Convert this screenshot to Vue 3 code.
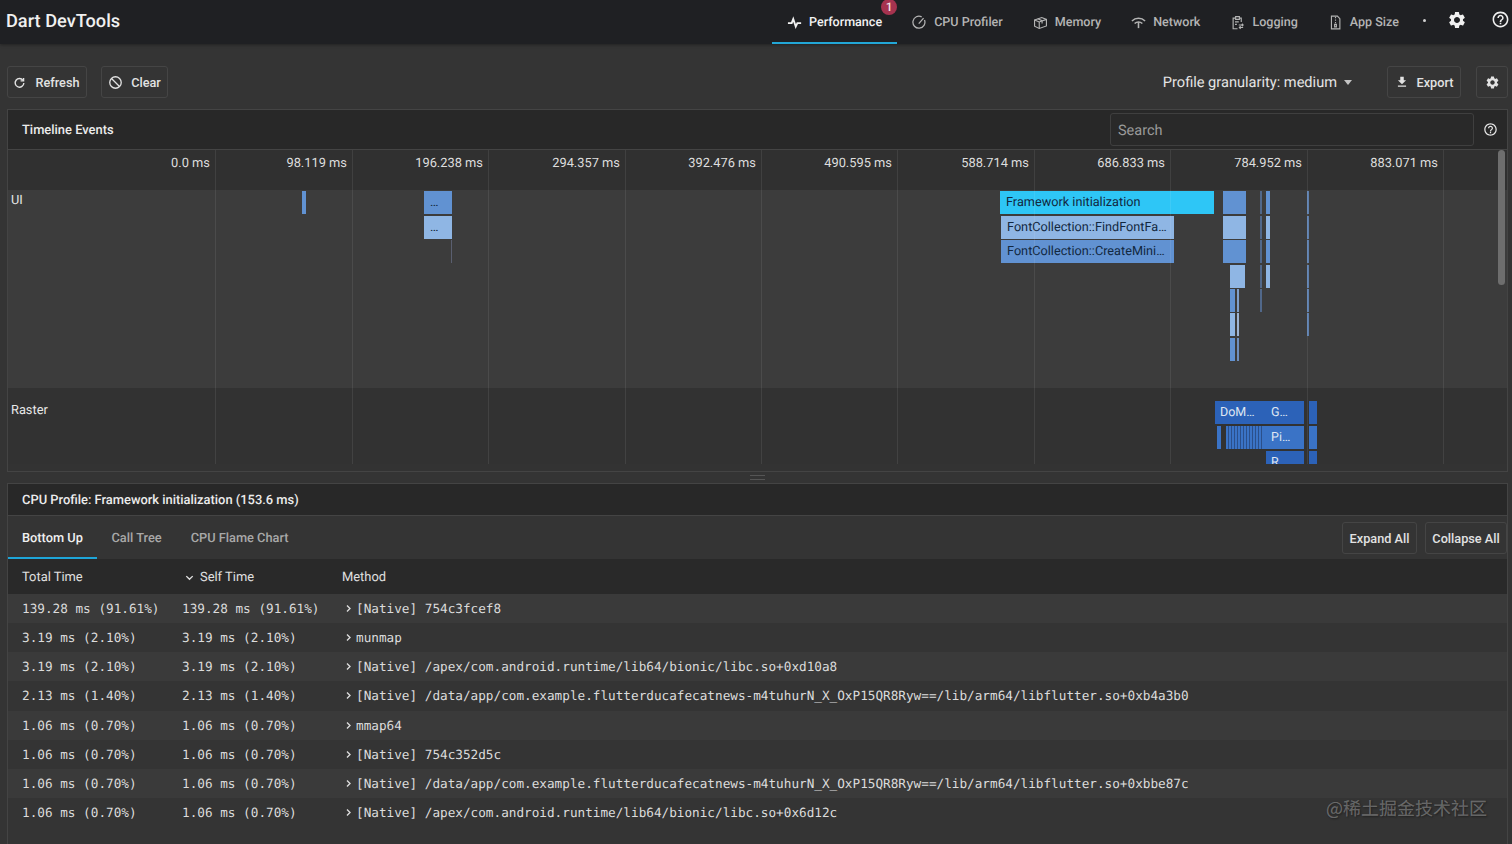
<script setup>
import { h } from 'vue'

const ICONS = {
  pulse: { stroke: ['M1.5 13h6L10 6.5l4 12 2.6-5.5h6'], w: 3 },
  gauge: { stroke: ['M20 8A9.6 9.6 0 1 1 15.5 3', 'M10.8 13.8 18.5 5'], w: 2 },
  box: { stroke: ['M2.5 8l11.5-4 7.5 3v10.5L10 21.5l-7.5-3.5z', 'M2.5 8l7.5 3.2L21.5 7', 'M10 11.2v10.3', 'M7.5 6l7 3v4.5'], w: 1.8 },
  wifi: { stroke: ['M1.5 9.5a15 15 0 0 1 21 0', 'M5.8 13.6a9 9 0 0 1 12.4 0', 'M12 11.5V21'], w: 2.5 },
  log: { stroke: ['M18 11V5h-3M9 5H5v17h7', 'M9 2.5h6V7H9z', 'M8 11h6M8 15h3', 'M14 16h7M19 14l2 2-2 2M21 20h-6M17 18l-2 2 2 2'], w: 1.8 },
  zip: { stroke: ['M5.5 1.8h9.5l4 4v16.4H5.5z', 'M12 3v2M12 7v2M12 11v2', 'M10.6 15h2.8v4h-2.8z'], w: 1.8 },
  refresh: { stroke: ['M18.5 8A8 8 0 1 0 20 13', 'M19.5 3.5V9h-5.5'], w: 2.6 },
  block: { stroke: ['M12 2.8a9.2 9.2 0 1 0 0 18.4 9.2 9.2 0 0 0 0-18.4z', 'M5.6 5.6l12.8 12.8'], w: 2.1 },
  download: { fill: ['M19 9h-4V3H9v6H5l7 7 7-7zM5 18v2h14v-2H5z'] },
  help: { fill: ['M11 18h2v-2h-2v2zm1-16C6.48 2 2 6.48 2 12s4.48 10 10 10 10-4.48 10-10S17.52 2 12 2zm0 18c-4.41 0-8-3.59-8-8s3.59-8 8-8 8 3.59 8 8-3.59 8-8 8zm0-14c-2.21 0-4 1.79-4 4h2c0-1.1.9-2 2-2s2 .9 2 2c0 2-3 1.75-3 5h2c0-2.25 3-2.5 3-5 0-2.21-1.79-4-4-4z'] },
  gear: { fill: ['M19.14 12.94c.04-.3.06-.61.06-.94 0-.32-.02-.64-.07-.94l2.03-1.58a.49.49 0 0 0 .12-.61l-1.92-3.32a.488.488 0 0 0-.59-.22l-2.39.96c-.5-.38-1.03-.7-1.62-.94l-.36-2.54a.484.484 0 0 0-.48-.41h-3.84c-.24 0-.43.17-.47.41l-.36 2.54c-.59.24-1.13.57-1.62.94l-2.39-.96c-.22-.08-.47 0-.59.22L2.74 8.87c-.12.21-.08.47.12.61l2.03 1.58c-.05.3-.09.63-.09.94s.02.64.07.94l-2.03 1.58a.49.49 0 0 0-.12.61l1.92 3.32c.12.22.37.29.59.22l2.39-.96c.5.38 1.03.7 1.62.94l.36 2.54c.05.24.24.41.48.41h3.84c.24 0 .44-.17.47-.41l.36-2.54c.59-.24 1.13-.56 1.62-.94l2.39.96c.22.08.47 0 .59-.22l1.92-3.32c.12-.22.07-.47-.12-.61l-2.01-1.58zM12 15.6c-1.98 0-3.6-1.62-3.6-3.6s1.62-3.6 3.6-3.6 3.6 1.62 3.6 3.6-1.62 3.6-3.6 3.6z'] },
  chevR: { stroke: ['M8 4l8 8-8 8'], w: 3.6 },
  chevD: { stroke: ['M5 9l7 7 7-7'], w: 3 },
}
const Icon = (props) => {
  const ic = ICONS[props.name]
  const kids = [
    ...(ic.fill || []).map((d) => h('path', { d, fill: 'currentColor' })),
    ...(ic.stroke || []).map((d) => h('path', { d, fill: 'none', stroke: 'currentColor', 'stroke-width': ic.w })),
  ]
  return h('svg', { viewBox: '0 0 24 24', width: props.size, height: props.size, style: 'flex:none;display:block' }, kids)
}
Icon.props = ['name', 'size']

const tabs = [
  { label: 'Performance', icon: 'pulse', active: true },
  { label: 'CPU Profiler', icon: 'gauge' },
  { label: 'Memory', icon: 'box' },
  { label: 'Network', icon: 'wifi' },
  { label: 'Logging', icon: 'log' },
  { label: 'App Size', icon: 'zip' },
]

const OX = 8
const OY = 150
const gridX = [215, 352, 488, 625, 761, 897, 1034, 1170, 1307, 1443]
const axis = ['0.0 ms', '98.119 ms', '196.238 ms', '294.357 ms', '392.476 ms', '490.595 ms', '588.714 ms', '686.833 ms', '784.952 ms', '883.071 ms']
const axisItems = axis.map((t, i) => ({ t, right: 1507 - gridX[i] + 5 }))

const MID = '#6192d2'
const LIGHT = '#8fb6e4'
const DIM = '#5d7fae'
const CY = '#2ec6f6'
const R1 = '#2c62b8'
const R2 = '#3a73c6'
const rows = [191, 216, 240, 265, 289, 313, 338]
function b(x1, x2, y, color, text = '', cls = '', hgt = 23) {
  return { x1, x2, y, color, text, cls, hgt }
}
const bars = [
  b(302, 306, 191, MID),
  b(424, 452, 191, MID, '…', 'dark'),
  b(424, 452, 216, LIGHT, '…', 'dark'),
  b(451, 452, 240, '#5a5f70'),
  b(1000, 1214, 191, CY, 'Framework initialization', 'dark'),
  b(1001, 1174, 216, LIGHT, 'FontCollection::FindFontFa…', 'dark'),
  b(1001, 1174, 240, MID, 'FontCollection::CreateMini…', 'dark'),
  b(1223, 1246, rows[0], MID),
  b(1223, 1246, rows[1], LIGHT),
  b(1223, 1246, rows[2], MID),
  b(1230, 1245, rows[3], LIGHT),
  b(1230, 1235, rows[4], MID),
  b(1237, 1239, rows[4], '#7f9fca'),
  b(1230, 1235, rows[5], LIGHT),
  b(1237, 1239, rows[5], '#9db4d4'),
  b(1230, 1235, rows[6], MID),
  b(1237, 1239, rows[6], '#6f8fbd'),
  ...rows.slice(0, 5).map((y) => b(1260, 1262, y, '#51688a')),
  b(1266, 1270, rows[0], MID),
  b(1266, 1270, rows[1], LIGHT),
  b(1266, 1270, rows[2], MID),
  b(1266, 1270, rows[3], LIGHT),
  ...rows.slice(0, 6).map((y) => b(1307, 1309, y, DIM)),
  b(1215, 1304, 401, R1),
  b(1309, 1317, 401, R1),
  b(1217, 1221, 426, R2),
  b(1226, 1262, 426, R2, '', 'stripes'),
  b(1262, 1304, 426, R2),
  b(1309, 1317, 426, R2),
  b(1266, 1304, 451, R1),
  b(1309, 1317, 451, R1),
]
const barStyle = (x) => ({
  left: x.x1 - OX + 'px',
  top: x.y - OY + 'px',
  width: x.x2 - x.x1 + 'px',
  height: x.hgt + 'px',
  backgroundColor: x.color,
})
const labels = [
  { t: 'DoM…', x: 1220, y: 401 },
  { t: 'G…', x: 1271, y: 401 },
  { t: 'Pi…', x: 1271, y: 426 },
  { t: 'R', x: 1271, y: 451 },
]

const data = [
  ['139.28 ms (91.61%)', '[Native] 754c3fcef8'],
  ['3.19 ms (2.10%)', 'munmap'],
  ['3.19 ms (2.10%)', '[Native] /apex/com.android.runtime/lib64/bionic/libc.so+0xd10a8'],
  ['2.13 ms (1.40%)', '[Native] /data/app/com.example.flutterducafecatnews-m4tuhurN_X_OxP15QR8Ryw==/lib/arm64/libflutter.so+0xb4a3b0'],
  ['1.06 ms (0.70%)', 'mmap64'],
  ['1.06 ms (0.70%)', '[Native] 754c352d5c'],
  ['1.06 ms (0.70%)', '[Native] /data/app/com.example.flutterducafecatnews-m4tuhurN_X_OxP15QR8Ryw==/lib/arm64/libflutter.so+0xbbe87c'],
  ['1.06 ms (0.70%)', '[Native] /apex/com.android.runtime/lib64/bionic/libc.so+0x6d12c'],
]
</script>

<template>
  <div class="page">
    <header class="top">
      <div class="brand">Dart DevTools</div>
      <nav class="nav">
        <div v-for="t in tabs" :key="t.label" class="nav-tab" :class="{ on: t.active }">
          <Icon :name="t.icon" :size="15" />
          <span>{{ t.label }}</span>
          <span v-if="t.active" class="badge">1</span>
        </div>
        <span class="nav-dot"></span>
        <Icon class="nav-gear" name="gear" :size="20" />
        <Icon class="nav-help" name="help" :size="19" />
      </nav>
    </header>

    <main class="main">
      <div class="toolbar">
        <button class="btn refresh"><Icon name="refresh" :size="13" />Refresh</button>
        <button class="btn clear"><Icon name="block" :size="15" />Clear</button>
        <div class="gran">Profile granularity: medium<span class="caret"></span></div>
        <button class="btn export"><Icon name="download" :size="14" />Export</button>
        <button class="btn cog"><Icon name="gear" :size="15" /></button>
      </div>

      <section class="panel timeline">
        <div class="panel-head">
          <span class="panel-title">Timeline Events</span>
          <div class="search">Search</div>
          <Icon class="q" name="help" :size="15" />
        </div>
        <div class="chart">
          <div class="band axis"></div>
          <div class="band ui"></div>
          <div class="band raster"></div>
          <div class="lane lane-ui">UI</div>
          <div class="lane lane-raster">Raster</div>
          <div v-for="x in bars" :key="x.x1 + '-' + x.y" class="bar" :class="x.cls" :style="barStyle(x)">{{ x.text }}</div>
          <div v-for="l in labels" :key="l.t" class="rlabel" :style="{ left: l.x - OX + 'px', top: l.y - OY + 'px' }">{{ l.t }}</div>
          <div v-for="x in gridX" :key="x" class="gline" :style="{ left: x - OX + 'px' }"></div>
          <div v-for="a in axisItems" :key="a.t" class="tick" :style="{ right: a.right + 'px' }">{{ a.t }}</div>
          <div class="thumb"></div>
        </div>
      </section>

      <div class="grip"><span></span></div>

      <section class="panel cpu">
        <div class="cpu-head"><span class="panel-title">CPU Profile: Framework initialization (153.6 ms)</span></div>
        <div class="cpu-tabs">
          <div class="ctab on">Bottom Up</div>
          <div class="ctab">Call Tree</div>
          <div class="ctab">CPU Flame Chart</div>
          <button class="btn expand">Expand All</button>
          <button class="btn collapse">Collapse All</button>
        </div>
        <div class="thead">
          <div>Total Time</div>
          <div class="self"><Icon name="chevD" :size="11" />Self Time</div>
          <div>Method</div>
        </div>
        <div v-for="(r, i) in data" :key="i" class="trow" :class="{ alt: i % 2 === 0 }">
          <div>{{ r[0] }}</div>
          <div>{{ r[0] }}</div>
          <div class="method"><Icon name="chevR" :size="9" /><span>{{ r[1] }}</span></div>
        </div>
      </section>
    </main>
    <div class="mark">@稀土掘金技术社区</div>
  </div>
</template>

<style>
html, body { margin: 0; background: #333; overflow: hidden; }
</style>

<style scoped>
.page {
  position: relative;
  width: 1512px;
  height: 844px;
  overflow: hidden;
  background: #343434;
  color: #e6e6e6;
  font-family: Roboto, "Noto Sans", sans-serif;
  font-size: 13px;
  text-rendering: geometricPrecision;
}
.top {
  height: 44px;
  display: flex;
  align-items: stretch;
  justify-content: space-between;
  background: #1f2023;
  box-shadow: 0 1px 3px rgba(0, 0, 0, .35);
  position: relative;
}
.brand {
  padding: 11px 0 0 6px;
  font-size: 18.2px;
  font-weight: 500;
  line-height: 22px;
  color: #f0f0f0;
}
.nav { display: flex; align-items: stretch; margin-right: 2px; }
.nav-tab {
  position: relative;
  display: flex;
  align-items: center;
  gap: 7px;
  padding: 0 15px;
  font-weight: 500;
  font-size: 12.55px;
  color: #b4b4b4;
}
.nav-tab.on { color: #f2f2f2; box-shadow: inset 0 -2px 0 #22a7d6; }
.badge {
  position: absolute;
  top: -1px;
  right: 0;
  width: 16px;
  height: 16px;
  border-radius: 50%;
  background: #a6334f;
  color: #f3e3e7;
  font-size: 12px;
  line-height: 16px;
  text-align: center;
}
.nav-dot {
  width: 3px;
  height: 3px;
  border-radius: 50%;
  background: #d0d0d0;
  align-self: flex-start;
  margin: 19px 0 0 9px;
}
.nav-gear { align-self: flex-start; margin: 10px 0 0 21px; color: #f0f0f0; }
.nav-help { align-self: flex-start; margin: 10px 0 0 24px; color: #f0f0f0; }

.main { padding: 22px 4px 0 7px; display: flex; flex-direction: column; height: 778px; }
.toolbar { display: flex; align-items: center; height: 32px; flex: none; }
.btn {
  display: flex;
  align-items: center;
  justify-content: center;
  height: 32px;
  box-sizing: border-box;
  background: transparent;
  border: 1px solid #454545;
  border-radius: 3px;
  color: #e2e2e2;
  font: 500 12.7px Roboto, sans-serif;
  padding: 0;
}
.refresh { width: 80px; gap: 9px; padding-right: 1px; }
.clear { width: 67px; gap: 8px; margin-left: 14px; }
.gran { margin-left: auto; font-size: 14.6px; color: #e4e4e4; display: flex; align-items: center; }
.caret {
  width: 0;
  height: 0;
  margin-left: 7px;
  border: 4.5px solid transparent;
  border-top: 5px solid #c4c4c4;
  border-bottom: 0;
}
.export { width: 74px; gap: 8px; margin-left: 35px; }
.cog { width: 32px; margin-left: 15px; }

.panel { border: 1px solid #444; box-sizing: border-box; flex: none; }
.timeline { margin-top: 11px; height: 363px; background: #333; }
.panel-head {
  height: 40px;
  box-sizing: border-box;
  display: flex;
  align-items: center;
  padding-left: 14px;
  background: #282828;
  border-bottom: 1px solid #444;
}
.panel-title { font-weight: 500; font-size: 12.9px; color: #ececec; padding-top: 2px; }
.search {
  margin-left: auto;
  width: 364px;
  height: 33px;
  line-height: 33px;
  box-sizing: border-box;
  border: 1px solid #3f3f3f;
  border-radius: 3px;
  padding-left: 7px;
  font-size: 14.5px;
  color: #9a9a9a;
  background: #292929;
}
.q { margin: 0 9px 0 9px; color: #e6e6e6; }

.chart { position: relative; height: 314px; overflow: hidden; }
.band { position: absolute; left: 0; right: 0; }
.axis { top: 0; height: 40px; background: #303030; }
.ui { top: 40px; height: 198px; background: #3c3c3c; }
.raster { top: 238px; height: 76px; background: #323232; }
.lane { position: absolute; left: 3px; font-size: 12.8px; color: #e8e8e8; line-height: 16px; }
.lane-ui { top: 43px; }
.lane-raster { top: 253px; }
.gline { position: absolute; top: 0; bottom: 0; width: 1px; background: rgba(255, 255, 255, .08); }
.tick { position: absolute; top: 6px; font-size: 12.85px; line-height: 16px; color: #dedede; }
.bar {
  position: absolute;
  box-sizing: border-box;
  overflow: hidden;
  white-space: nowrap;
  font-size: 12.7px;
  line-height: 24px;
}
.bar.dark { color: #12283f; padding-left: 6px; }
.bar.stripes {
  background-image: repeating-linear-gradient(90deg, transparent 0 2px, rgba(30, 50, 90, .55) 2px 3px);
}
.rlabel { position: absolute; font-size: 12.5px; line-height: 24px; color: #dfe6f2; }
.thumb {
  position: absolute;
  top: 0;
  right: 2px;
  width: 7px;
  height: 135px;
  border-radius: 4px;
  background: #6e6e6e;
}
.grip { height: 11px; flex: none; display: flex; align-items: center; justify-content: center; }
.grip span {
  width: 15px;
  height: 3px;
  border-top: 1px solid #555;
  border-bottom: 1px solid #555;
}
.cpu { flex: 1; border-bottom: 0; overflow: hidden; }
.cpu-head {
  height: 32px;
  box-sizing: border-box;
  display: flex;
  align-items: center;
  padding-left: 14px;
  background: #282828;
  border-bottom: 1px solid #444;
}
.cpu-tabs { display: flex; height: 43px; align-items: stretch; }
.ctab {
  padding: 2px 14.5px 0;
  display: flex;
  align-items: center;
  font-weight: 500;
  font-size: 12.8px;
  color: #a8a8a8;
  white-space: nowrap;
}
.ctab.on { color: #f0f0f0; padding: 2px 15px 0 14px; width: 60px; box-shadow: inset 0 -2px 0 #1ea5d8; }
.btn.expand { width: 75px; margin: 6px 0 5px auto; height: 32px; }
.btn.collapse { width: 82px; margin: 6px 0 5px 8px; height: 32px; }
.thead, .trow {
  display: grid;
  grid-template-columns: 160px 160px 1fr;
  padding-left: 14px;
  align-items: center;
}
.thead { height: 35px; box-sizing: border-box; padding-top: 2px; background: #292929; color: #e0e0e0; font-size: 12.9px; }
.self { display: flex; align-items: center; gap: 5px; padding-left: 2px; }
.trow {
  height: 29.15px;
  font: 12.7px "DejaVu Sans Mono", "Liberation Mono", monospace;
  color: #dcdcdc;
  white-space: pre;
}
.trow.alt { background: #3a3a3a; }
.method { display: flex; align-items: center; gap: 3px; padding-left: 2px; }
.mark {
  position: absolute;
  left: 1326px;
  top: 796px;
  font: 18px "Noto Sans CJK SC", sans-serif;
  line-height: 25px;
  color: rgba(255, 255, 255, .3);
  text-shadow: 1px 1px 2px rgba(0, 0, 0, .4);
}
</style>
